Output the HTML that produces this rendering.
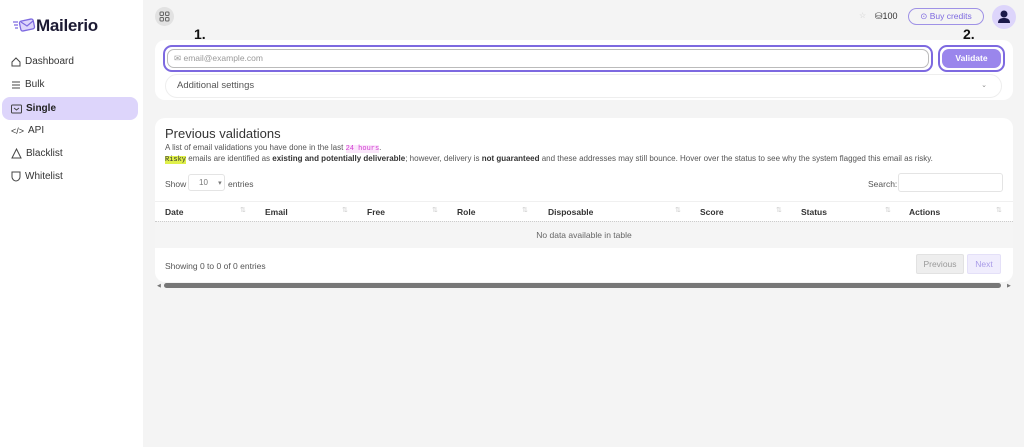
<!DOCTYPE html><html><head><style>
*{box-sizing:border-box;margin:0;padding:0}
body{width:1024px;height:447px;background:#f4f4f4;font-family:"Liberation Sans",sans-serif;color:#333;position:relative;overflow:hidden;font-size:9px}
.sb{position:absolute;left:0;top:0;width:143px;height:447px;background:#fff}
.logo{position:absolute;left:12px;top:16px;font-size:17px;font-weight:bold;color:#1c1a33;letter-spacing:-.3px}
.nav{position:absolute;left:2px;width:136px;height:23px;display:flex;align-items:center;padding-left:9px;font-size:10px;color:#333}
.nav svg{margin-right:4px}
.act{background:#ddd5fb;border-radius:8px;font-weight:bold;color:#222}
.a{position:absolute}
.card{background:#fff;border-radius:10px}
.th{position:absolute;top:207px;font-weight:bold;font-size:8.5px;color:#333}
.ar{position:absolute;top:206px;color:#ccc;font-size:7px}
</style></head><body>
<div class="sb">
<div class="logo"><svg width="24" height="16" viewBox="0 0 24 16" style="vertical-align:-2px"><path d="M1 5h5M2 8h4M3 11h3" stroke="#7d69e0" stroke-width="1.2"/><rect x="8" y="3" width="14" height="10" rx="2" fill="#ddd5fb" stroke="#7d69e0" stroke-width="1.3" transform="rotate(-12 15 8)"/><path d="M9 5l6 4 6-5" fill="none" stroke="#7d69e0" stroke-width="1.2"/></svg>Mailerio</div>
<div class="nav" style="top:50px"><svg width="10" height="10"><path d="M1 5L5 1l4 4v4H1z" fill="none" stroke="#444"/></svg>Dashboard</div>
<div class="nav" style="top:73px"><svg width="10" height="10"><path d="M1 2h8M1 5h8M1 8h8" stroke="#444"/></svg>Bulk</div>
<div class="nav act" style="top:97px"><svg width="11" height="10"><rect x=".5" y="1" width="10" height="8" rx="1" fill="none" stroke="#444"/><path d="M3 4l2.5 2L8 4" fill="none" stroke="#444"/></svg>Single</div>
<div class="nav" style="top:119px"><span style="font-size:9px;margin-right:4px">&lt;/&gt;</span>API</div>
<div class="nav" style="top:142px"><svg width="11" height="11"><path d="M5.5 1L10 10H1z" fill="none" stroke="#444"/></svg>Blacklist</div>
<div class="nav" style="top:165px"><svg width="10" height="11"><path d="M1 1h8v5c0 2-2 4-4 4S1 8 1 6z" fill="none" stroke="#444"/></svg>Whitelist</div>
</div>
<div class="a" style="left:155px;top:7px;width:19px;height:19px;border-radius:50%;background:#e2e2e2"><svg width="19" height="19"><g fill="none" stroke="#666"><rect x="5" y="5" width="3.5" height="3.5" rx="1"/><rect x="10.5" y="5" width="3.5" height="3.5" rx="1"/><rect x="5" y="10.5" width="3.5" height="3.5" rx="1"/><rect x="10.5" y="10.5" width="3.5" height="3.5" rx="1"/></g></svg></div>
<div class="a" style="left:859px;top:11px;color:#ccc;font-size:8px">☆</div>
<div class="a" style="left:875px;top:11px;font-size:9px;color:#333">⛁100</div>
<div class="a" style="left:908px;top:8px;width:76px;height:17px;border:1px solid #9f92e6;border-radius:9px;color:#7d69e0;font-size:8.5px;text-align:center;line-height:15px">⊙ Buy credits</div>
<div class="a" style="left:992px;top:5px;width:24px;height:24px;border-radius:50%;background:#ddd5fb"><svg width="24" height="24"><circle cx="12" cy="9" r="3.5" fill="#1c1a4a"/><path d="M6 18c0-4 3-5 6-5s6 1 6 5z" fill="#1c1a4a"/></svg></div>
<div class="a" style="left:194px;top:26px;font-size:14px;font-weight:bold;color:#111">1.</div>
<div class="a" style="left:963px;top:26px;font-size:14px;font-weight:bold;color:#111">2.</div>
<div class="a card" style="left:155px;top:40px;width:858px;height:60px"></div>
<div class="a" style="left:163px;top:45px;width:770px;height:27px;border:2.5px solid #7d69e0;border-radius:9px;padding:2px"><div style="height:100%;border:1px solid #bbb;border-radius:7px;padding-left:6px;line-height:16px;color:#999;font-size:8.5px">✉ email@example.com</div></div>
<div class="a" style="left:938px;top:45px;width:67px;height:27px;border:2.5px solid #7d69e0;border-radius:9px;padding:2px"><div style="height:100%;background:#9a86ec;border-radius:7px;text-align:center;line-height:18px;color:#fff;font-weight:bold;font-size:8.5px">Validate</div></div>
<div class="a" style="left:165px;top:74px;width:837px;height:24px;border:1px solid #eee;border-radius:12px;padding-left:11px;line-height:22px;font-size:9.5px;color:#555">Additional settings<span style="position:absolute;right:14px;color:#888;font-size:7px">⌄</span></div>
<div class="a card" style="left:155px;top:118px;width:858px;height:164px"></div>
<div class="a" style="left:165px;top:126px;font-size:13px;color:#333">Previous validations</div>
<div class="a" style="left:165px;top:143px;font-size:8px;color:#555">A list of email validations you have done in the last <span style="background:#fbe6fb;color:#d13cd1;font-family:'Liberation Mono';font-size:7px">24 hours</span>.</div>
<div class="a" style="left:165px;top:154px;font-size:8px;color:#555;white-space:nowrap"><span style="background:#dff04a;font-family:'Liberation Mono';font-size:7px;color:#333">Risky</span> emails are identified as <b style="color:#333">existing and potentially deliverable</b>; however, delivery is <b style="color:#333">not guaranteed</b> and these addresses may still bounce. Hover over the status to see why the system flagged this email as risky.</div>
<div class="a" style="left:165px;top:179px;font-size:8.5px;color:#555">Show</div>
<div class="a" style="left:188px;top:174px;width:37px;height:17px;border:1px solid #e4e4e4;border-radius:3px;font-size:8px;color:#777;padding:3px 0 0 10px">10 <span style="margin-left:8px;font-size:7px">▾</span></div>
<div class="a" style="left:228px;top:179px;font-size:8.5px;color:#555">entries</div>
<div class="a" style="left:868px;top:179px;font-size:8.5px;color:#555">Search:</div>
<div class="a" style="left:898px;top:173px;width:105px;height:19px;border:1px solid #e4e4e4;border-radius:3px"></div>
<div class="a" style="left:155px;top:201px;width:858px;border-top:1px solid #f0f0f0"></div>
<div class="th" style="left:165px">Date</div><div class="ar" style="left:240px">⇅</div>
<div class="th" style="left:265px">Email</div><div class="ar" style="left:342px">⇅</div>
<div class="th" style="left:367px">Free</div><div class="ar" style="left:432px">⇅</div>
<div class="th" style="left:457px">Role</div><div class="ar" style="left:522px">⇅</div>
<div class="th" style="left:548px">Disposable</div><div class="ar" style="left:675px">⇅</div>
<div class="th" style="left:700px">Score</div><div class="ar" style="left:776px">⇅</div>
<div class="th" style="left:801px">Status</div><div class="ar" style="left:885px">⇅</div>
<div class="th" style="left:909px">Actions</div><div class="ar" style="left:996px">⇅</div>
<div class="a" style="left:155px;top:221px;width:858px;height:27px;background:#f5f5f5;border-top:1px dotted #ccc;text-align:center;line-height:26px;font-size:8.5px;color:#666">No data available in table</div>
<div class="a" style="left:165px;top:261px;font-size:8.5px;color:#555">Showing 0 to 0 of 0 entries</div>
<div class="a" style="left:916px;top:254px;width:48px;height:20px;background:#eee;border:1px solid #e2e2e2;border-radius:2px;text-align:center;line-height:18px;font-size:8.5px;color:#999">Previous</div>
<div class="a" style="left:967px;top:254px;width:34px;height:20px;background:#f0edfd;border:1px solid #e4e0f8;border-radius:2px;text-align:center;line-height:18px;font-size:8.5px;color:#a99be8">Next</div>
<div class="a" style="left:157px;top:283px;font-size:5px;color:#777">◀</div>
<div class="a" style="left:164px;top:283px;width:837px;height:5px;background:#777;border-radius:3px"></div>
<div class="a" style="left:1007px;top:283px;font-size:5px;color:#777">▶</div>
</body></html>
